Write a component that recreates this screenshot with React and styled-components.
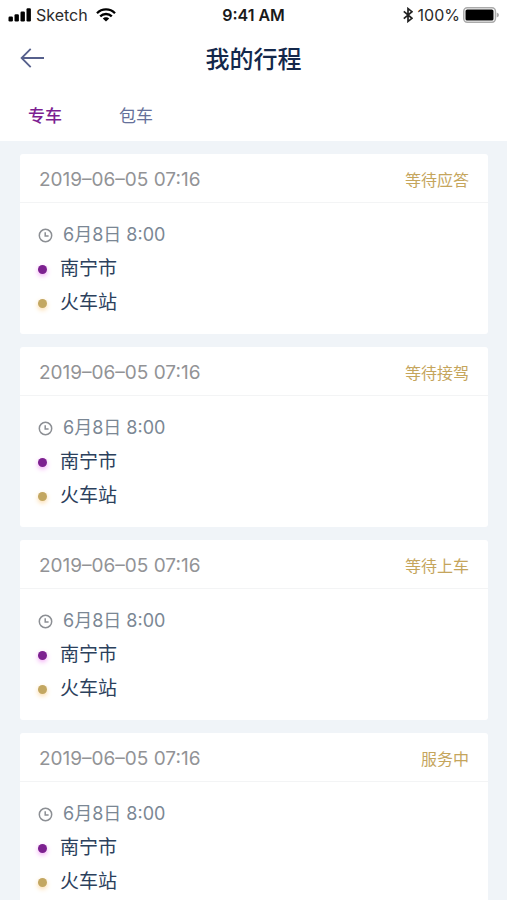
import React, { useState } from "react";
import styled, { createGlobalStyle } from "styled-components";

const GlobalStyle = createGlobalStyle`
  * { box-sizing: border-box; }
  body {
    margin: 0;
    background: #f0f4f8;
    font-family: Inter, "Noto Sans CJK SC", sans-serif;
  }
  h1, p, ul { margin: 0; padding: 0; }
`;

const Page = styled.div`
  min-height: 100vh;
  background: #f0f4f8;
`;

const Header = styled.header`
  background: #fff;
`;

const StatusBar = styled.div`
  display: grid;
  grid-template-columns: 1fr auto 1fr;
  align-items: center;
  height: 30px;
  padding: 0 8px;
  font-size: 16px;
  line-height: 30px;
  color: #2b2b2b;
`;

const StatusGroup = styled.div`
  display: flex;
  align-items: center;
  gap: ${(p) => p.$gap}px;
  justify-content: ${(p) => (p.$end ? "flex-end" : "flex-start")};
`;

const Carrier = styled.span`
  margin-right: 4px;
`;

const Battery = styled.span`
  display: flex;
  align-items: center;
  gap: 3px;
`;

const Clock = styled.span`
  font-size: 16px;
  font-weight: 600;
  color: #1a1a1a;
`;

const TitleBar = styled.div`
  display: grid;
  grid-template-columns: 1fr auto 1fr;
  align-items: center;
  height: 56px;
  padding: 0 20px;
`;

const BackButton = styled.button`
  display: flex;
  justify-self: start;
  padding: 0;
  border: 0;
  background: none;
  cursor: pointer;
`;

const Title = styled.h1`
  padding-top: 4px;
  font-size: 24px;
  line-height: 36px;
  font-weight: 500;
  color: #14284b;
`;

const Tabs = styled.nav`
  display: flex;
  gap: 57px;
  height: 55px;
  padding: 0 28px;
`;

const Tab = styled.button`
  height: 56px;
  padding: 0;
  border: 0;
  background: none;
  font-family: inherit;
  font-size: 17px;
  font-weight: ${(p) => (p.$active ? 500 : 400)};
  color: ${(p) => (p.$active ? "#7d1f92" : "#65709a")};
  cursor: pointer;
`;

const TripList = styled.ul`
  display: flex;
  flex-direction: column;
  gap: 13px;
  padding: 13px 19px 13px 20px;
  list-style: none;
`;

const Card = styled.li`
  padding-bottom: 15px;
  border-radius: 3px;
  background: #fff;
`;

const CardHead = styled.div`
  display: flex;
  align-items: center;
  justify-content: space-between;
  height: 49px;
  padding: 4px 19px 0;
  border-bottom: 1px solid #f3f4f5;
`;

const Created = styled.time`
  font-size: 19px;
  line-height: 28px;
  color: #929396;
`;

const Status = styled.span`
  font-size: 16px;
  line-height: 28px;
  color: #c5a55c;
`;

const CardBody = styled.div`
  padding: 14px 18px 0;
`;

const Row = styled.p`
  display: grid;
  grid-template-columns: ${(p) => (p.$time ? 25 : 22)}px 1fr;
  align-items: center;
  height: 34px;
  font-size: ${(p) => (p.$time ? 18 : 19)}px;
  line-height: 36px;
  color: ${(p) => (p.$time ? "#7b8794" : "#2b405c")};
`;

const Dot = styled.span`
  width: 9px;
  height: 9px;
  border-radius: 50%;
  background: ${(p) => p.$color};
  box-shadow: 0 2px 5px ${(p) => p.$glow};
`;

const SignalIcon = () => (
  <svg width="24" height="14" viewBox="0 0 24 14" aria-hidden="true">
    <rect x="0.5" y="8.5" width="4.4" height="5" rx="1.2" />
    <rect x="6.5" y="6.2" width="4.4" height="7.3" rx="1.2" />
    <rect x="12.5" y="3.5" width="4.4" height="10" rx="1.2" />
    <rect x="18.5" y="0.3" width="4.4" height="13.2" rx="1.2" />
  </svg>
);

const WifiIcon = () => (
  <svg width="20" height="14" viewBox="0 0 20 14" fill="none" stroke="#000" strokeWidth="2.3" aria-hidden="true">
    <path d="M1 5.2C6 .2 14 .2 19 5.2" />
    <path d="M4.2 8.4C7.4 5.2 12.6 5.2 15.8 8.4" />
    <path d="M10 13.6L6.8 10.5C8.5 8.8 11.5 8.8 13.2 10.5Z" fill="#000" stroke="none" />
  </svg>
);

const BluetoothIcon = () => (
  <svg width="10" height="16" viewBox="0 0 10 16" fill="none" stroke="#222" strokeWidth="1.7" aria-hidden="true">
    <path d="M.8 4.4L9 11.3L5 14.4V1.6L9 4.7L.8 11.6" />
  </svg>
);

const BatteryIcon = () => (
  <svg width="36" height="16" viewBox="0 0 36 16" aria-hidden="true">
    <rect x="0.8" y="0.8" width="31.6" height="14.4" rx="3.4" fill="#fff" stroke="#aaa" strokeWidth="1.5" />
    <rect x="2.5" y="2.5" width="28" height="11" rx="1.6" fill="#000" />
    <path d="M33.7 5.5Q36 6.2 36 8T33.7 10.5Z" fill="#aaa" />
  </svg>
);

const BackIcon = () => (
  <svg width="25" height="20" viewBox="0 0 25 20" fill="none" stroke="#56608c" strokeWidth="1.8" aria-hidden="true">
    <path d="M24 10H1.6M10.7 .8L1.6 10L10.7 19.2" />
  </svg>
);

const TimeIcon = () => (
  <svg width="15" height="15" viewBox="0 0 15 15" fill="none" stroke="#8c8f94" strokeWidth="1.5" aria-hidden="true">
    <circle cx="7.5" cy="7.5" r="6.2" />
    <path d="M7.2 4.2V8H10.6" />
  </svg>
);

const statuses = ["等待应答", "等待接驾", "等待上车", "服务中"];
const tabs = ["专车", "包车"];

function TripCard({ status }) {
  return (
    <Card>
      <CardHead>
        <Created dateTime="2019-06-05T07:16">2019–06–05 07:16</Created>
        <Status>{status}</Status>
      </CardHead>
      <CardBody>
        <Row $time>
          <TimeIcon />
          <span>6月8日 8:00</span>
        </Row>
        <Row>
          <Dot $color="#7d2190" $glow="#f3a9f5" />
          <span>南宁市</span>
        </Row>
        <Row>
          <Dot $color="#c3a761" $glow="#fbd9a5" />
          <span>火车站</span>
        </Row>
      </CardBody>
    </Card>
  );
}

export default function App() {
  const [active, setActive] = useState(0);
  return (
    <Page>
      <GlobalStyle />
      <Header>
        <StatusBar>
          <StatusGroup $gap={4}>
            <SignalIcon />
            <Carrier>Sketch</Carrier>
            <WifiIcon />
          </StatusGroup>
          <Clock>9:41 AM</Clock>
          <StatusGroup $gap={5} $end>
            <BluetoothIcon />
            <Battery>
              100%
              <BatteryIcon />
            </Battery>
          </StatusGroup>
        </StatusBar>
        <TitleBar>
          <BackButton type="button" aria-label="返回">
            <BackIcon />
          </BackButton>
          <Title>我的行程</Title>
        </TitleBar>
        <Tabs>
          {tabs.map((label, i) => (
            <Tab key={label} type="button" $active={i === active} onClick={() => setActive(i)}>
              {label}
            </Tab>
          ))}
        </Tabs>
      </Header>
      <TripList>
        {statuses.map((status) => (
          <TripCard key={status} status={status} />
        ))}
      </TripList>
    </Page>
  );
}
